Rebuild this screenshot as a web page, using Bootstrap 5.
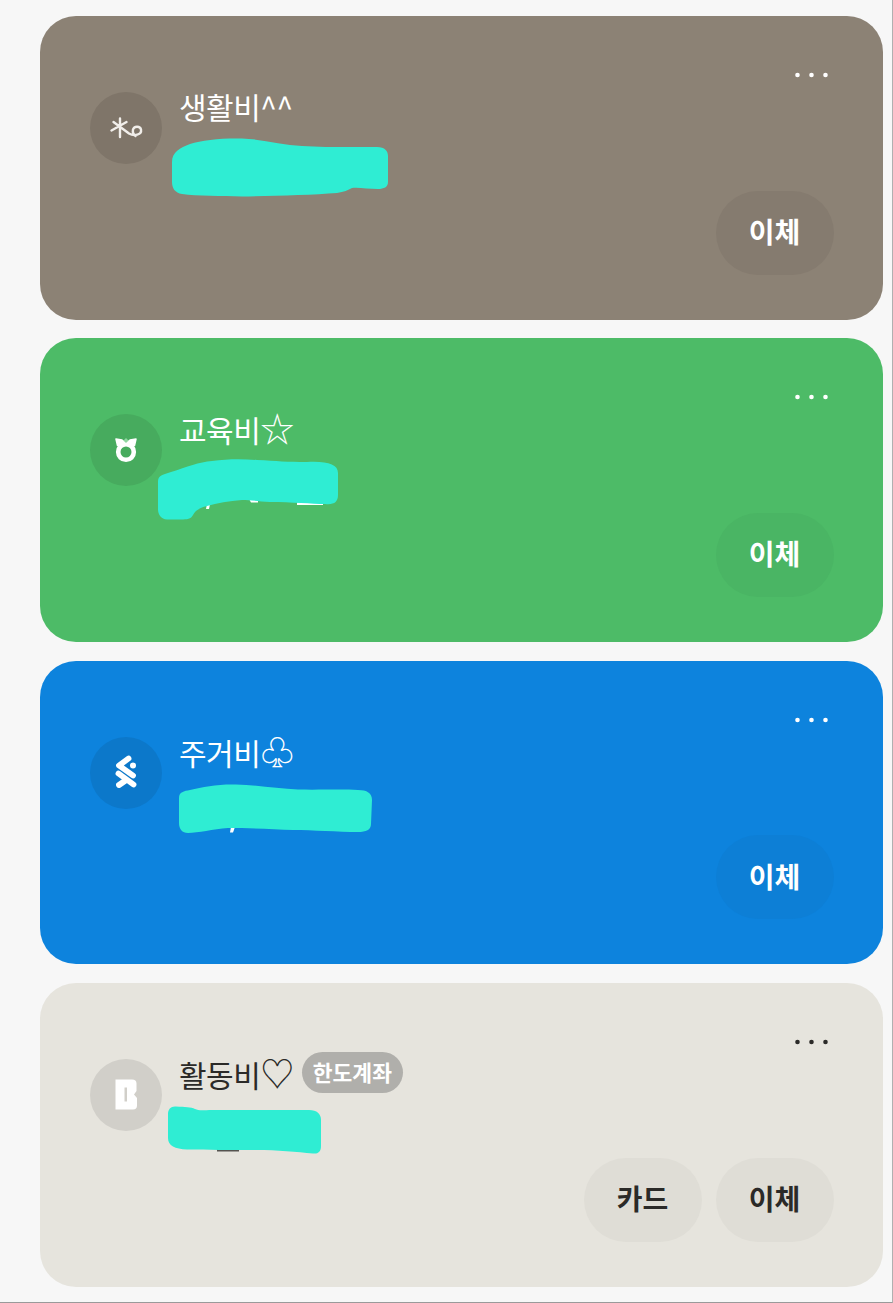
<!doctype html>
<html lang="ko">

<head>
    <meta charset="utf-8" />
    <meta name="viewport" content="width=device-width, initial-scale=1" />
    <title>계좌 목록</title>
    <link href="https://cdn.jsdelivr.net/npm/bootstrap@5.3.0/dist/css/bootstrap.min.css" rel="stylesheet" />
    <style>
        body {
            background-color: #f7f7f7;
            font-family: "Noto Sans CJK KR", "Noto Sans", sans-serif;
        }

        .page-wrap {
            height: 1303px;
            padding: 16px 9px 0 40px;
            border-right: 1px solid #b0b0b0;
            border-bottom: 1px solid #9a9a9a;
        }

        .acct-card {
            height: 303.7px;
            margin-bottom: 18.6px;
            padding: 52px 49.5px 45px 50px;
            border-radius: 36px;
            color: #fff;
        }

        .acct-brown { background-color: #8c8275; }
        .acct-green { background-color: #4dbb67; }
        .acct-blue { background-color: #0d83dd; }
        .acct-sand { background-color: #e6e4dd; color: #2b2a28; }

        .acct-brown .acct-logo { background-color: #7f7569; }
        .acct-green .acct-logo { background-color: #47ab5e; }
        .acct-blue .acct-logo { background-color: #0c78ca; }
        .acct-sand .acct-logo { background-color: #d1cfc9; }

        .acct-brown .acct-btn { background-color: #857b6f; }
        .acct-green .acct-btn { background-color: #4ab564; }
        .acct-blue .acct-btn { background-color: #0d7fd6; }
        .acct-sand .acct-btn { background-color: #dfddd6; color: #2b2a28; }

        .more-dots {
            height: 14px;
            margin-right: 6px;
        }

        .acct-logo {
            width: 72px;
            height: 72px;
            margin-top: 10px;
        }

        .acct-info {
            margin-top: 7px;
            margin-left: 17px;
        }

        .acct-name {
            height: 34px;
            font-size: 30px;
            line-height: 34px;
            letter-spacing: -0.5px;
        }

        .acct-sym {
            font-size: 34px;
            line-height: 34px;
        }

        .limit-tag {
            height: 41px;
            margin-top: -4px;
            margin-left: 8px;
            padding: 0 11px;
            font-size: 21.5px;
            font-weight: 700;
            color: #fff;
            background-color: #b0afab;
        }

        .num-slot {
            height: 30px;
        }

        .redact {
            position: absolute;
        }

        .redact-a { left: -7px; top: 15px; }
        .redact-b { left: -22px; top: 14px; }
        .redact-c { left: -1px; top: 16px; }
        .redact-d { left: -12px; top: 13px; }

        .btn-row {
            gap: 14px;
        }

        .acct-btn {
            width: 118px;
            height: 84px;
            padding: 0 0 3px 0;
            border: 0;
            border-radius: 42px;
            font-size: 28px;
            font-weight: 700;
            color: #fff;
        }
    </style>
</head>

<body>
    <div class="page-wrap">

        <div class="acct-card acct-brown d-flex flex-column">
            <div class="more-dots d-flex justify-content-end">
                <svg width="33" height="14" viewBox="0 0 33 14" fill="currentColor"><circle cx="2.5" cy="7" r="2.3"/><circle cx="16.500" cy="7" r="2.3"/><circle cx="30.500" cy="7" r="2.3"/></svg>
            </div>
            <div class="d-flex">
                <div class="acct-logo rounded-circle flex-shrink-0">
                    <svg width="72" height="72" viewBox="0 0 72 72" fill="none" stroke="#f1eeea" stroke-width="2.4" stroke-linecap="round">
                        <path d="M21.5 38.5 36.5 30M30 26.5V45M23.5 30 39 41.5C44 44.500 52 43 51 37.500 50 33.500 44 34 43 37.500 42.500 40 43.500 42.500 45.500 44" />
                    </svg>
                </div>
                <div class="acct-info">
                    <div class="acct-name">생활비^^</div>
                    <div class="num-slot position-relative">
                        <svg class="redact redact-a" width="216" height="59" viewBox="0 0 216 59">
                            <path fill="#2fedd3" d="M0 24C0 14 8 10 18 6 30 2 50 0 70 .5 90 1 110 7 130 8 155 9.500 185 9 205 9 213 9 216 13 216 18L216 44C216 49 212 51 206 51 196 51 186 49 180 50 176 52 172 54 165 55 140 57 100 58 70 58.500 50 58 25 58 10 56 3 55 0 50 0 44Z" />
                        </svg>
                    </div>
                </div>
            </div>
            <div class="btn-row d-flex justify-content-end mt-auto">
                <button type="button" class="acct-btn btn">이체</button>
            </div>
        </div>

        <div class="acct-card acct-green d-flex flex-column">
            <div class="more-dots d-flex justify-content-end">
                <svg width="33" height="14" viewBox="0 0 33 14" fill="currentColor"><circle cx="2.5" cy="7" r="2.3"/><circle cx="16.500" cy="7" r="2.3"/><circle cx="30.500" cy="7" r="2.3"/></svg>
            </div>
            <div class="d-flex">
                <div class="acct-logo rounded-circle flex-shrink-0">
                    <svg width="72" height="72" viewBox="0 0 72 72">
                        <circle cx="36" cy="38" r="7.800" fill="none" stroke="#fff" stroke-width="4.600" />
                        <path fill="#fff" stroke="#fff" stroke-width="1.500" stroke-linejoin="round" d="M26 25 32 26 36 29 40 26 46 25 44.500 31.500 40 30.500 36 30 32 30.500 27.500 31.500Z" />
                        <path fill="#8fd6a0" d="M36 24 38.500 26.500 36 29 33.500 26.500Z" />
                    </svg>
                </div>
                <div class="acct-info">
                    <div class="acct-name">교육비<span class="acct-sym">☆</span></div>
                    <div class="num-slot position-relative">
                        <svg class="redact redact-b" width="181" height="61" viewBox="0 0 181 61">
                            <path fill="#fff" d="M50 45h3l-1 5h-3ZM92 40h9v3.500h-7ZM140 43h26v3h-26Z" />
                            <path fill="#2fedd3" d="M1 22C1 16 8 15 14 13 30 8 42 3 55 2 70 0 85 0 100 1 120 2 130 3 150 3 170 2 181 5 181 14L181 36C181 43 177 46 168 45 155 45 135 43 113 43 100 42 92 41 85 41 72 42 60 44 50 47 42 49 38 52 36 56 34 60 30 60.500 24 60.500L10 60.500C4 60 1 56 1 50Z" />
                        </svg>
                    </div>
                </div>
            </div>
            <div class="btn-row d-flex justify-content-end mt-auto">
                <button type="button" class="acct-btn btn">이체</button>
            </div>
        </div>

        <div class="acct-card acct-blue d-flex flex-column">
            <div class="more-dots d-flex justify-content-end">
                <svg width="33" height="14" viewBox="0 0 33 14" fill="currentColor"><circle cx="2.5" cy="7" r="2.3"/><circle cx="16.500" cy="7" r="2.3"/><circle cx="30.500" cy="7" r="2.3"/></svg>
            </div>
            <div class="d-flex">
                <div class="acct-logo rounded-circle flex-shrink-0">
                    <svg width="72" height="72" viewBox="0 0 72 72" fill="none" stroke="#fff" stroke-width="5.800" stroke-linecap="round" stroke-linejoin="round">
                        <path d="M38.500 21.500 29 28.500 43 38.500" />
                        <path d="M28.500 36.500 43.500 47.500" />
                        <path d="M35.500 43.500 29 48" />
                        <circle cx="43" cy="28.500" r="3" fill="#fff" stroke="none" />
                    </svg>
                </div>
                <div class="acct-info">
                    <div class="acct-name">주거비<span class="acct-sym">♧</span></div>
                    <div class="num-slot position-relative">
                        <svg class="redact redact-c" width="194" height="50" viewBox="0 0 194 50">
                            <path fill="#fff" d="M53 43h4l-2 5.500h-3Z" />
                            <path fill="#2fedd3" d="M1 14C1 8 6 7 12 6 25 3 40 0 58 .5 80 1 100 5 120 5.500 140 6 165 5 180 6 189 6 194 9 194 16L193 40C193 46 188 48 180 48 160 48 135 46 115 46 95 45 70 44 50 44 35 45 20 49 10 49 4 49 1 45 1 39Z" />
                        </svg>
                    </div>
                </div>
            </div>
            <div class="btn-row d-flex justify-content-end mt-auto">
                <button type="button" class="acct-btn btn">이체</button>
            </div>
        </div>

        <div class="acct-card acct-sand d-flex flex-column">
            <div class="more-dots d-flex justify-content-end">
                <svg width="33" height="14" viewBox="0 0 33 14" fill="currentColor"><circle cx="2.5" cy="7" r="2.3"/><circle cx="16.500" cy="7" r="2.3"/><circle cx="30.500" cy="7" r="2.3"/></svg>
            </div>
            <div class="d-flex">
                <div class="acct-logo rounded-circle flex-shrink-0">
                    <svg width="72" height="72" viewBox="0 0 72 72">
                        <path fill="#fff" fill-rule="evenodd" d="M25.500 20.500H42Q46.500 20.500 46.500 24.500V32L44 35.500 47 39V46.500Q47 50.500 43 50.500H25.500ZM34.500 28.500V42.500H37V28.500Z" />
                    </svg>
                </div>
                <div class="acct-info">
                    <div class="d-flex align-items-start">
                        <div class="acct-name">활동비<span class="acct-sym">♡</span></div>
                        <span class="limit-tag rounded-pill d-inline-flex align-items-center">한도계좌</span>
                    </div>
                    <div class="num-slot position-relative">
                        <svg class="redact redact-d" width="154" height="48" viewBox="0 0 154 48">
                            <path fill="#55534f" d="M50 42h22v3.500H50Z" />
                            <path fill="#2fedd3" d="M1 8C1 3 4 0 9 .5 18 1 24 1 28 3 32 5 37 4 45 4L142 4C150 4 154 8 154 14L154 40C154 46 151 48 146 47.500 130 46 110 44 90 44 65 44 40 44 20 43.500 8 43 1 40 1 32Z" />
                        </svg>
                    </div>
                </div>
            </div>
            <div class="btn-row d-flex justify-content-end mt-auto">
                <button type="button" class="acct-btn btn">카드</button>
                <button type="button" class="acct-btn btn">이체</button>
            </div>
        </div>

    </div>

    <script src="https://cdn.jsdelivr.net/npm/bootstrap@5.3.0/dist/js/bootstrap.bundle.min.js"></script>
</body>

</html>
